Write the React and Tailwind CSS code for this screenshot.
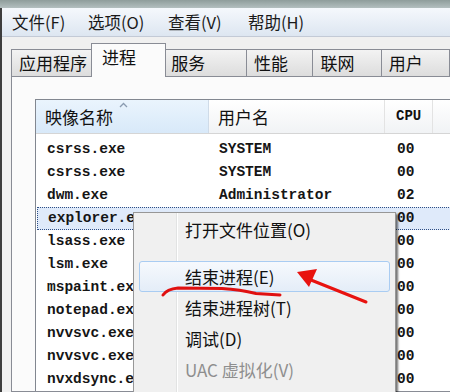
import React from 'react';

const cjk = { fontFamily: '"Noto Sans CJK SC", "Noto Sans", sans-serif' };
const mono = { fontFamily: '"Liberation Mono", "DejaVu Sans Mono", monospace' };

// rows from "explorer" down are half covered by the context menu
const rows = [
  ['csrss.exe', 'SYSTEM', '00'],
  ['csrss.exe', 'SYSTEM', '00'],
  ['dwm.exe', 'Administrator', '02'],
  ['explorer.e', '', '00', true],
  ['lsass.exe', '', '00'],
  ['lsm.exe', '', '00'],
  ['mspaint.ex', '', '00'],
  ['notepad.ex', '', '00'],
  ['nvvsvc.exe', '', '00'],
  ['nvvsvc.exe', '', '00'],
  ['nvxdsync.e', '', '00'],
];

const tabs = [
  { label: '应用程序', w: 'w-[84px]' },
  { label: '进程', w: 'w-[77px]', active: true },
  { label: '服务', w: 'w-[85px]' },
  { label: '性能', w: 'w-[68px]' },
  { label: '联网', w: 'w-[70px]' },
  { label: '用户', w: 'w-[70px]' },
];

function Tab({ label, w, active }) {
  if (active) {
    return (
      <div className={`${w} relative z-10 -mx-[2px] h-[34px] border border-b-0 border-[#898c95] bg-[#fbfbfb] pl-[10px] text-[17px] leading-[26px] text-[#111]`} style={cjk}>
        {label}
      </div>
    );
  }
  return (
    <div className={`${w} h-[28px] border border-b-0 border-l-0 first:border-l border-[#898c95] bg-gradient-to-b from-[#f3f3f3] to-[#dcdcdc] pl-[7px] text-[17px] leading-[26px] text-[#111]`} style={cjk}>
      {label}
    </div>
  );
}

function MenuItem({ children, hot, disabled }) {
  if (hot) {
    return (
      <div className="mx-[5px] flex h-[31px] items-center rounded-[3px] border border-[#a9ccf2] bg-gradient-to-b from-[#f6f9fd] to-[#e4edf8] pl-[45px] text-[17px] text-[#111]" style={cjk}>
        {children}
      </div>
    );
  }
  return (
    <div className={`mx-[5px] flex h-[31px] items-center pl-[46px] text-[17px] ${disabled ? 'text-[#8e8e8e]' : 'text-[#111]'}`} style={cjk}>
      {children}
    </div>
  );
}

export default function App() {
  return (
    <div className="relative flex h-[392px] w-[450px] flex-col overflow-hidden bg-[#f0f0f0]">
      <div className="h-[9px] bg-gradient-to-b from-[#8f9d9b] to-[#b3bfbf]" />
      <div className="flex flex-1 flex-col border-l-2 border-[#3d3d3d]">
        <div className="flex h-[29px] items-center border-b border-[#c3cad6] bg-gradient-to-b from-[#f5f8fc] to-[#dde6f1] pl-[10px] text-[16.5px] text-[#1a1a1a]" style={cjk}>
          <span className="w-[76px]">文件(F)</span>
          <span className="w-[80px]">选项(O)</span>
          <span className="w-[80px]">查看(V)</span>
          <span>帮助(H)</span>
        </div>
        <div className="flex flex-1 flex-col pl-[9px] pt-[6px]">
          <div className="flex h-[34px] items-end">
            {tabs.map((t) => (
              <Tab key={t.label} {...t} />
            ))}
          </div>
          <div className="-mr-[20px] -mt-px flex flex-1 flex-col border border-[#898c95] bg-[#fbfbfb] pl-[23px] pt-[22px]">
            <div className="flex-1 border-l border-t border-[#828790] bg-white">
              <div className="flex h-[34px] border-b border-[#d5d5d5] text-[#111]">
                <div className="relative flex w-[173px] items-center border-r border-[#cfdbe8] bg-gradient-to-b from-[#eaf4fd] to-[#d8e9f9] pl-[9px] text-[17px]" style={cjk}>
                  映像名称
                  <svg className="absolute left-[83px] top-[2px]" width="9" height="6" viewBox="0 0 9 6">
                    <polyline points="1,5 4.5,1.5 8,5" fill="none" stroke="#8a9bb0" strokeWidth="1.3" />
                  </svg>
                </div>
                <div className="flex w-[176px] items-center border-r border-[#e3e3e3] bg-gradient-to-b from-[#ffffff] to-[#f1f3f5] pl-[9px] text-[17px]" style={cjk}>
                  用户名
                </div>
                <div className="flex w-[48px] items-center border-r border-[#e3e3e3] bg-gradient-to-b from-[#ffffff] to-[#f1f3f5] pl-[11px] text-[14px] font-bold" style={mono}>
                  CPU
                </div>
                <div className="flex-1 bg-gradient-to-b from-[#ffffff] to-[#f1f3f5]" />
              </div>
              <div className="pt-[4px] text-[14.5px] font-bold text-[#151515]" style={mono}>
                {rows.map(([name, user, cpu, sel], i) => (
                  <div
                    key={i}
                    className={`flex h-[23px] items-center ${sel ? 'ml-px border border-dotted border-[#2f4f86] bg-[#dfeafa]' : ''}`}
                  >
                    <span className={`${sel ? 'w-[171px] pl-[10px]' : 'w-[173px] pl-[11px]'} whitespace-nowrap`}>{name}</span>
                    <span className="w-[176px] whitespace-nowrap pl-[10px]">{user}</span>
                    <span className="pl-[12px]">{cpu}</span>
                  </div>
                ))}
              </div>
            </div>
          </div>
        </div>
      </div>

      <div className="absolute left-[133px] top-[212px] h-[200px] w-[263px] border border-[#979797] bg-[#f0f0f0] pt-px shadow-[2px_2px_2px_rgba(0,0,0,0.55)]">
        <div className="absolute bottom-0 left-[42px] top-0 w-[2px] border-l border-r border-l-[#e2e3e3] border-r-white" />
        <div className="relative">
          <MenuItem>打开文件位置(O)</MenuItem>
          <div className="h-[16px]" />
          <MenuItem hot>结束进程(E)</MenuItem>
          <MenuItem>结束进程树(T)</MenuItem>
          <MenuItem>调试(D)</MenuItem>
          <MenuItem disabled>UAC 虚拟化(V)</MenuItem>
        </div>
      </div>

      <svg className="pointer-events-none absolute left-0 top-0" width="450" height="392" viewBox="0 0 450 392">
        <path d="M163 295 Q167 289 178 288 L222 288.5 Q240 289.5 256 293.5 L280 295" fill="none" stroke="#e01010" strokeWidth="3" strokeLinecap="round" />
        <path d="M366 302 L306 278" fill="none" stroke="#e8120f" strokeWidth="3" strokeLinecap="round" />
        <polygon points="297,272 317,269 309,287" fill="#e8120f" />
      </svg>
    </div>
  );
}
